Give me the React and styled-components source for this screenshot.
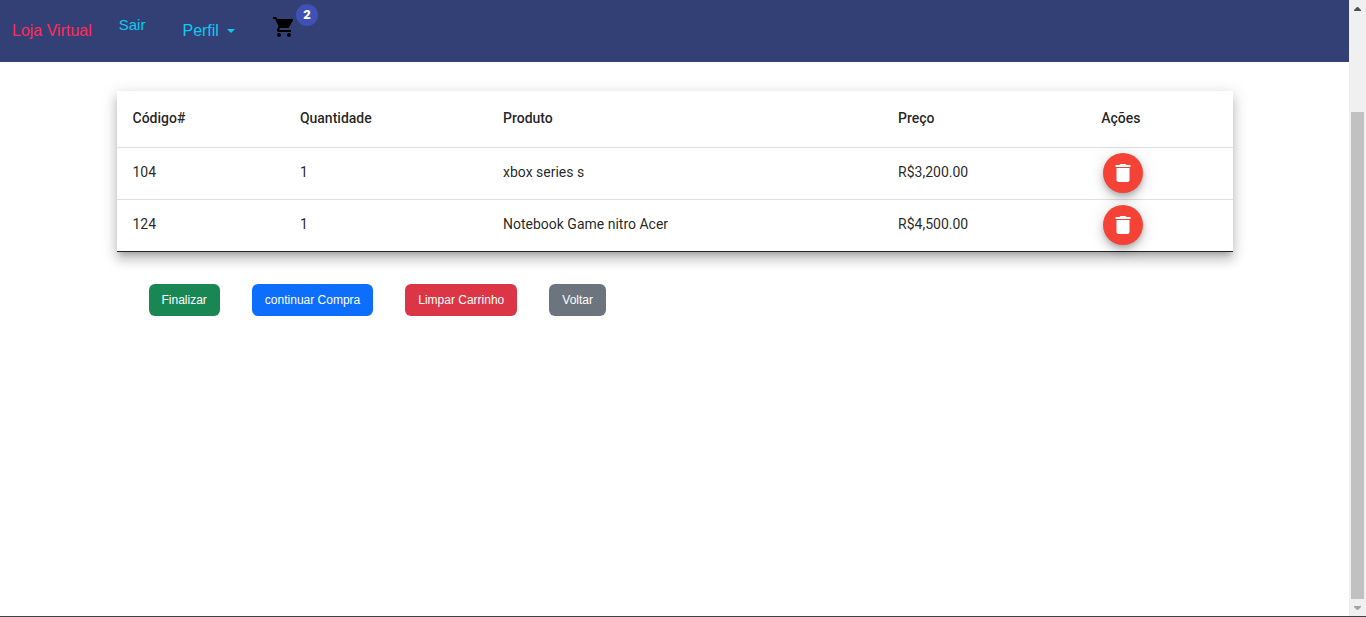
import React from "react";
import styled, { createGlobalStyle } from "styled-components";

const GlobalStyle = createGlobalStyle`
  *, *::before, *::after { box-sizing: border-box; }
  body {
    margin: 0;
    background: #fff;
    color: #212529;
    font-family: "Liberation Sans", Arial, sans-serif;
    font-size: 16px;
  }
`;

const Shell = styled.div`
  display: flex;
  min-height: 100vh;
  border-bottom: 1px solid #434043;
`;

const Page = styled.div`
  flex: 1;
  min-width: 0;
`;

const Navbar = styled.nav`
  display: flex;
  align-items: center;
  height: 62px;
  padding: 0 12px;
  background: #334075;
`;

const Brand = styled.a`
  margin-right: 27px;
  color: #ff2d5b;
  line-height: 24px;
  text-decoration: none;
`;

const NavLink = styled.a`
  align-self: flex-start;
  margin: 16px 37px 0 0;
  color: #0dcaf0;
  font-size: 15px;
  line-height: 18px;
  text-decoration: none;
`;

const MenuButton = styled.button`
  display: flex;
  align-items: center;
  gap: 8px;
  margin-right: 37px;
  padding: 0;
  border: 0;
  background: none;
  color: #0dcaf0;
  font: inherit;
  line-height: 24px;
  cursor: pointer;

  &::after {
    content: "";
    border: 4px solid transparent;
    border-top-color: currentColor;
    border-bottom: 0;
  }
`;

const CartButton = styled.button`
  position: relative;
  align-self: flex-start;
  display: flex;
  margin-top: 15px;
  padding: 0;
  border: 0;
  background: none;
  color: #000;
  cursor: pointer;
`;

const Badge = styled.span`
  position: absolute;
  top: -11px;
  left: 24px;
  width: 22px;
  border-radius: 50%;
  background: #3f51b5;
  color: #fff;
  font: 900 13px/22px Roboto, sans-serif;
  text-align: center;
`;

const Container = styled.main`
  max-width: 1140px;
  margin: 0 auto;
  padding: 29px 12px;
`;

const Table = styled.table`
  width: 100%;
  table-layout: fixed;
  border-collapse: separate;
  border-spacing: 0;
  border-bottom: 1px solid #212529;
  background: #fff;
  box-shadow: 0 5px 5px -3px rgba(0, 0, 0, 0.2),
    0 8px 10px 1px rgba(0, 0, 0, 0.14), 0 3px 14px 2px rgba(0, 0, 0, 0.12);
  color: rgba(0, 0, 0, 0.87);
  font-family: Roboto, sans-serif;
  font-size: 14px;
  line-height: 20px;
`;

const Col = styled.col`
  width: ${({ $width }) => $width};
`;

const HeadCell = styled.th`
  height: 57px;
  padding: 0 16px 2px;
  border-bottom: 1px solid #dee0e2;
  font-weight: 500;
  text-align: left;
`;

const Row = styled.tr`
  &:not(:last-child) td {
    height: 52px;
    border-bottom: 1px solid #dee0e2;
  }
`;

const Cell = styled.td`
  height: 51px;
  padding: ${({ $action }) => ($action ? "0 18px 2px" : "0 16px 4px")};
`;

const DeleteButton = styled.button`
  display: flex;
  align-items: center;
  justify-content: center;
  width: 40px;
  height: 40px;
  padding: 0;
  border: 0;
  border-radius: 50%;
  background: #f44336;
  color: #fff;
  box-shadow: 0 3px 5px -1px rgba(0, 0, 0, 0.2),
    0 6px 10px 0 rgba(0, 0, 0, 0.14), 0 1px 18px 0 rgba(0, 0, 0, 0.12);
  cursor: pointer;
`;

const Actions = styled.div`
  display: flex;
  flex-wrap: wrap;
  gap: 32px;
  padding: 32px;
`;

const ActionButton = styled.button`
  height: 32px;
  padding: 0 13px;
  border: 0;
  border-radius: 6px;
  background: ${({ $color }) => $color};
  color: #fff;
  font: 500 12px/18px "Liberation Sans", Arial, sans-serif;
  white-space: nowrap;
  cursor: pointer;
`;

const ScrollTrack = styled.div`
  display: flex;
  flex-direction: column;
  align-items: center;
  width: 17px;
  background: #f0f0f0;
`;

const ScrollArrow = styled.span`
  display: flex;
  align-items: center;
  justify-content: center;
  height: 17px;
  color: ${({ $color }) => $color};
`;

const ScrollSpace = styled.div`
  flex: 95;
`;

const ScrollThumb = styled.div`
  flex: 487;
  width: 13px;
  background: #c1c1c1;
`;

const CartIcon = () => (
  <svg width="24" height="24" viewBox="0 0 24 24" fill="currentColor" aria-hidden="true">
    <path d="M7 18c-1.1 0-1.99.9-1.99 2S5.9 22 7 22s2-.9 2-2-.9-2-2-2zM1 2v2h2l3.6 7.59-1.35 2.45c-.16.28-.25.61-.25.96 0 1.1.9 2 2 2h12v-2H7.42c-.14 0-.25-.11-.25-.25l.03-.12.9-1.63h7.45c.75 0 1.41-.41 1.75-1.03l3.58-6.49c.08-.14.12-.31.12-.48 0-.55-.45-1-1-1H5.21l-.94-2H1zm16 16c-1.1 0-1.99.9-1.99 2s.89 2 1.99 2 2-.9 2-2-.9-2-2-2z" />
  </svg>
);

const TrashIcon = () => (
  <svg width="24" height="24" viewBox="0 0 24 24" fill="currentColor" aria-hidden="true">
    <path d="M5.5 19c0 1.1.9 2 2 2h9c1.1 0 2-.9 2-2V7h-13v12zM19.5 4h-4l-1-1h-5l-1 1h-4v2h15V4z" />
  </svg>
);

const columns = [
  { label: "Código#", width: "15%" },
  { label: "Quantidade", width: "18.2%" },
  { label: "Produto", width: "35.4%" },
  { label: "Preço", width: "18.2%" },
  { label: "Ações", width: "13.2%" },
];

const items = [
  { code: 104, quantity: 1, product: "xbox series s", price: "R$3,200.00" },
  { code: 124, quantity: 1, product: "Notebook Game nitro Acer", price: "R$4,500.00" },
];

const actions = [
  { label: "Finalizar", color: "#198754" },
  { label: "continuar Compra", color: "#0d6efd" },
  { label: "Limpar Carrinho", color: "#dc3545" },
  { label: "Voltar", color: "#6c757d" },
];

export default function App() {
  return (
    <>
      <GlobalStyle />
      <Shell>
        <Page>
          <Navbar>
            <Brand href="#">Loja Virtual</Brand>
            <NavLink href="#">Sair</NavLink>
            <MenuButton type="button" aria-haspopup="menu">Perfil</MenuButton>
            <CartButton type="button" aria-label="Carrinho">
              <CartIcon />
              <Badge>2</Badge>
            </CartButton>
          </Navbar>
          <Container>
            <Table>
              <colgroup>
                {columns.map((c) => (
                  <Col key={c.label} $width={c.width} />
                ))}
              </colgroup>
              <thead>
                <tr>
                  {columns.map((c) => (
                    <HeadCell key={c.label} scope="col">{c.label}</HeadCell>
                  ))}
                </tr>
              </thead>
              <tbody>
                {items.map((item) => (
                  <Row key={item.code}>
                    <Cell>{item.code}</Cell>
                    <Cell>{item.quantity}</Cell>
                    <Cell>{item.product}</Cell>
                    <Cell>{item.price}</Cell>
                    <Cell $action>
                      <DeleteButton type="button" aria-label={`Remover ${item.product}`}>
                        <TrashIcon />
                      </DeleteButton>
                    </Cell>
                  </Row>
                ))}
              </tbody>
            </Table>
            <Actions>
              {actions.map((a) => (
                <ActionButton key={a.label} type="button" $color={a.color}>{a.label}</ActionButton>
              ))}
            </Actions>
          </Container>
        </Page>
        <ScrollTrack aria-hidden="true">
          <ScrollArrow $color="#505050">
            <svg width="7" height="4" viewBox="0 0 7 4" fill="currentColor">
              <path d="M0 4V3L3 0h1l3 3v1z" />
            </svg>
          </ScrollArrow>
          <ScrollSpace />
          <ScrollThumb />
          <ScrollArrow $color="#a3a3a3">
            <svg width="7" height="4" viewBox="0 0 7 4" fill="currentColor">
              <path d="M0 0v1l3 3h1l3-3V0z" />
            </svg>
          </ScrollArrow>
        </ScrollTrack>
      </Shell>
    </>
  );
}
